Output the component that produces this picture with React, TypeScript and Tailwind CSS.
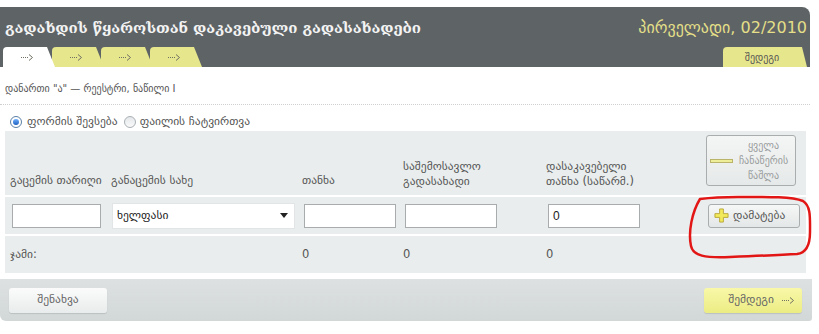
import React from 'react';

const ka = "font-['DejaVu_Sans',sans-serif]";

// dotted arrow used on the wizard tabs and the next button
const Arrow = () => (
  <svg width="13" height="7" viewBox="0 0 13 7" className="shrink-0">
    <g fill="#6f6f62">
      <rect x="0" y="3" width="1" height="1" />
      <rect x="2" y="3" width="1" height="1" />
      <rect x="4" y="3" width="1" height="1" />
      <rect x="6" y="3" width="1" height="1" />
    </g>
    <path d="M8 0.5 L11.5 3.5 L8 6.5" fill="none" stroke="#6f6f62" strokeWidth="1" />
  </svg>
);

const Tab: React.FC<{ active?: boolean; z: string; first?: boolean }> = ({ active, z, first }) => (
  <div
    className={`relative ${z} ${first ? 'ml-[3px]' : '-ml-[3px]'} h-[20px] w-[52px] flex items-center justify-center pr-[4px] rounded-tl-[4px] [clip-path:polygon(0_0,calc(100%-8px)_0,100%_100%,0_100%)] ${
      active ? 'bg-white' : 'bg-[#e6e68c]'
    }`}
  >
    <Arrow />
  </div>
);

const Radio: React.FC<{ checked?: boolean }> = ({ checked }) => (
  <span
    className={`inline-flex w-[12px] h-[12px] rounded-full border items-center justify-center ${
      checked ? 'border-[#5b7fa6] bg-white' : 'border-[#a9b0b5] bg-gradient-to-b from-[#e4e7ea] to-[#fafafa]'
    }`}
  >
    {checked && <span className="w-[6px] h-[6px] rounded-full bg-gradient-to-b from-[#6fb0ff] to-[#1e5fc0]" />}
  </span>
);

const Input: React.FC<{ value?: string; w: string }> = ({ value, w }) => (
  <div className={`${w} h-[24px] bg-white border border-[#a8acac] flex items-center px-[4px] text-[12px] text-[#222] font-['Liberation_Sans',sans-serif]`}>
    {value}
  </div>
);

export default function App() {
  return (
    <div className={`relative w-[819px] h-[334px] bg-white overflow-hidden ${ka}`}>
      {/* header */}
      <div className="pt-[7px] w-[810px]">
        <div className="bg-[#5e6466] rounded-tr-[8px] h-[60px] flex flex-col">
          <div className="flex items-center justify-between h-[40px] pl-[5px] pr-[3px] pt-[2px]">
            <h1 className="font-['DejaVu_Serif',serif] font-bold text-[15px] text-[#f3f3f3] tracking-[-0.1px]">
              გადახდის წყაროსთან დაკავებული გადასახადები
            </h1>
            <span className="text-[16px] text-[#e4df88]">პირველადი, 02/2010</span>
          </div>
          <div className="flex items-end justify-between h-[20px]">
            <div className="flex">
              <Tab active first z="z-[4]" />
              <Tab z="z-[3]" />
              <Tab z="z-[2]" />
              <Tab z="z-[1]" />
            </div>
            <div className="mr-[3px] h-[20px] w-[84px] rounded-tl-[4px] bg-[#e6e68c] flex items-center justify-center pr-[6px] text-[10px] text-[#555] [clip-path:polygon(0_0,calc(100%-5px)_0,100%_100%,0_100%)]">
              შედეგი
            </div>
          </div>
        </div>
      </div>

      {/* sub title */}
      <div className="h-[38px] flex items-center pt-[6px] px-[5px] text-[10px] text-[#555] border-b border-dotted border-[#cfcfcf] w-[810px]">
        დანართი "ა" — რეესტრი, ნაწილი I
      </div>

      {/* radios */}
      <div className="flex items-center h-[26px] pt-[8px] pl-[10px] text-[11.5px] text-[#555]">
        <Radio checked />
        <span className="ml-[5px] mr-[6px]">ფორმის შევსება</span>
        <Radio />
        <span className="ml-[4px]">ფაილის ჩატვირთვა</span>
      </div>

      {/* table panel */}
      <div className="ml-[5px] w-[801px] bg-[#e9eded] text-[11.5px] text-[#555]">
        <div className="grid grid-cols-[101px_191px_101px_143px_160px_92px] pl-[5px] h-[66px] items-end border-b-2 border-white">
          <div className="pb-[6px]">გაცემის თარიღი</div>
          <div className="pb-[6px]">განაცემის სახე</div>
          <div className="pb-[6px]">თანხა</div>
          <div className="pb-[6px] leading-[15px]">საშემოსავლო<br />გადასახადი</div>
          <div className="pb-[6px] leading-[15px]">დასაკავებელი<br />თანხა (საწარმ.)</div>
          <div className="self-start mt-[4px] h-[51px] w-[90px] rounded-[3px] border border-[#a9adad] bg-gradient-to-b from-[#f4f5f5] to-[#e6e9e9] flex items-center">
            <svg width="24" height="6" className="ml-[3px] shrink-0">
              <rect x="0.5" y="1.5" width="22" height="3" fill="#eeee98" stroke="#b9b46a" />
            </svg>
            <div className="text-[10px] leading-[15px] text-[#999d9d] text-center flex-1 pr-[2px]">
              ყველა<br />ჩანაწერის<br />წაშლა
            </div>
          </div>
        </div>
        <div className="grid grid-cols-[101px_191px_101px_143px_160px_92px] pl-[7px] h-[39px] items-center border-b-2 border-white">
          <Input w="w-[89px]" />
          <div className="w-[181px] h-[24px] bg-white shadow-[0_0_0_1px_#e2e5e5] flex items-center justify-between pl-[4px] pr-[6px] text-[11.5px] text-[#222]">
            <span>ხელფასი</span>
            <svg width="8" height="5"><path d="M0 0h8L4 5z" fill="#222" /></svg>
          </div>
          <Input w="w-[92px]" />
          <Input w="w-[92px]" />
          <Input w="w-[92px]" value="0" />
          <div className="h-[24px] w-[92px] rounded-[3px] border border-[#a9adad] bg-gradient-to-b from-[#f6f7f7] to-[#e4e7e7] flex items-center pl-[5px] gap-[4px]">
            <svg width="15" height="15" viewBox="0 0 16 16">
              <path d="M6 1h4v5h5v4h-5v5H6v-5H1V6h5z" fill="#f2ea5a" stroke="#b8a83a" strokeWidth="1" />
            </svg>
            <span className="text-[11.5px] text-[#555]">დამატება</span>
          </div>
        </div>
        <div className="grid grid-cols-[101px_191px_101px_143px_160px_92px] pl-[5px] h-[37px] items-center">
          <div>ჯამი:</div>
          <div />
          <div>0</div>
          <div>0</div>
          <div>0</div>
          <div />
        </div>
      </div>

      {/* footer */}
      <div className="mt-[6px] w-[812px] h-[42px] rounded-bl-[6px] rounded-br-[3px] bg-gradient-to-b from-[#dde1e1] to-[#d2d7d7] flex items-center justify-between pl-[9px] pr-[10px]">
        <div className="w-[98px] h-[25px] rounded-[3px] bg-gradient-to-b from-[#fbfbfb] to-[#e9ecec] shadow-[0_1px_1px_rgba(0,0,0,0.12)] flex items-center justify-center text-[11.5px] text-[#666]">
          შენახვა
        </div>
        <div className="w-[98px] h-[25px] rounded-[3px] bg-gradient-to-b from-[#f8f8a8] to-[#ecec84] shadow-[0_1px_1px_rgba(0,0,0,0.12)] flex items-center justify-end gap-[8px] pr-[7px] text-[11.5px] text-[#666]">
          <span>შემდეგი</span>
          <Arrow />
        </div>
      </div>

      {/* hand-drawn annotation */}
      <svg className="absolute inset-0 pointer-events-none" width="819" height="334">
        <path
          d="M700 199 C692 212 688 232 691 246 C693 256 705 258 730 257 C755 256 780 255 797 254 C806 253 810 246 810 232 C810 218 811 206 803 201 C790 196 760 197 738 197 C720 197 708 198 700 199"
          fill="none"
          stroke="#e31616"
          strokeWidth="2.5"
          strokeLinecap="round"
        />
      </svg>
    </div>
  );
}
